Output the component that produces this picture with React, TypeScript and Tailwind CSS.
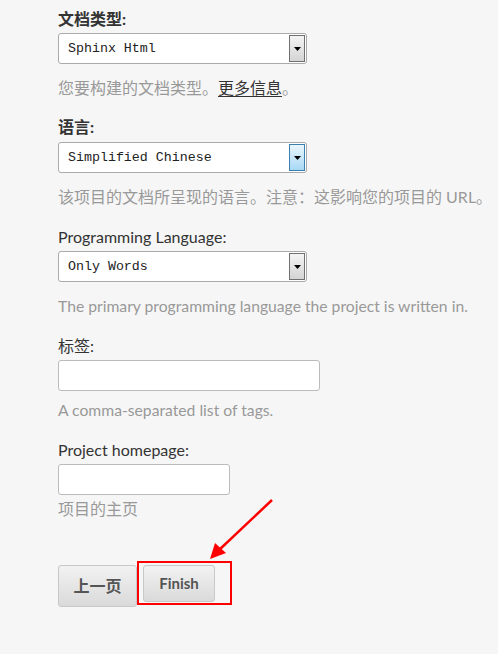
import React from 'react';

const sans = "font-['Lato','Noto_Sans_CJK_SC',sans-serif]";
const mono = "font-['Liberation_Mono','Noto_Sans_CJK_SC',monospace]";

function FakeSelect({ value, focused }: { value: string; focused?: boolean }) {
  return (
    <div className="flex h-[31px] w-[249px] items-stretch rounded-[3px] border border-[#aaa] bg-white">
      <div className={`flex flex-1 items-center pl-[9px] text-[13.3px] text-[#222] ${mono}`}>{value}</div>
      <div
        className={
          focused
            ? 'm-[1px] flex w-[16px] items-center justify-center border border-[#3c7fb1] bg-gradient-to-b from-[#eaf6fd] to-[#a7d8f5]'
            : 'm-[1px] flex w-[16px] items-center justify-center border border-[#707070] bg-gradient-to-b from-[#f4f4f4] to-[#d4d4d4]'
        }
      >
        <svg width="7" height="4" viewBox="0 0 7 4">
          <path d="M0 0h7L3.5 4z" fill="#000" />
        </svg>
      </div>
    </div>
  );
}

export default function App() {
  return (
    <div className={`min-h-[654px] w-[498px] bg-[#f6f6f6] pl-[58px] pt-[7px] ${sans}`}>
      {/* doc type */}
      <div className="h-[24px] text-[16px] leading-[24px] font-bold text-[#333]">文档类型:</div>
      <div className="mt-[2px]">
        <FakeSelect value="Sphinx Html" />
      </div>
      <p className="mt-[13px] text-[16px] leading-[22px] text-[#999]">
        您要构建的文档类型。
        <a className="text-[#333] underline underline-offset-2">更多信息</a>。
      </p>

      {/* language */}
      <div className="mt-[16px] h-[24px] text-[16px] leading-[24px] font-bold text-[#333]">语言:</div>
      <div className="mt-[3px]">
        <FakeSelect value="Simplified Chinese" focused />
      </div>
      <p className="mt-[13px] whitespace-nowrap text-[16px] leading-[22px] text-[#999]">
        该项目的文档所呈现的语言。注意：这影响您的项目的 URL。
      </p>

      {/* programming language */}
      <div className="mt-[17px] h-[24px] text-[16px] leading-[24px] text-[#333]">Programming Language:</div>
      <div className="mt-[2px]">
        <FakeSelect value="Only Words" />
      </div>
      <p className="mt-[13px] text-[15.7px] leading-[22px] text-[#999]">
        The primary programming language the project is written in.
      </p>

      {/* tags */}
      <div className="mt-[17px] h-[24px] text-[16px] leading-[24px] text-[#333]">标签:</div>
      <input className="mt-[2px] block h-[31px] w-[262px] rounded-[3px] border border-[#bbb] bg-white outline-none" />
      <p className="mt-[8px] text-[15.7px] leading-[22px] text-[#999]">A comma-separated list of tags.</p>

      {/* homepage */}
      <div className="mt-[17px] h-[24px] text-[16px] leading-[24px] text-[#333]">Project homepage:</div>
      <input className="mt-[2px] block h-[31px] w-[172px] rounded-[3px] border border-[#bbb] bg-white outline-none" />
      <p className="mt-[3px] text-[16px] leading-[22px] text-[#999]">项目的主页</p>

      {/* buttons */}
      <div className="relative mt-[45px] flex items-start gap-[6px]">
        <button className="h-[42px] w-[79px] rounded-[3px] border border-[#c8c8c8] bg-gradient-to-b from-[#f2f2f2] to-[#dadada] text-[16px] font-bold text-[#555]">
          上一页
        </button>
        <button className="h-[37px] w-[72px] rounded-[3px] border border-[#c8c8c8] bg-gradient-to-b from-[#f2f2f2] to-[#dadada] text-[15px] font-bold text-[#555]">
          Finish
        </button>

        {/* annotation: red box + arrow */}
        <div className="pointer-events-none absolute left-[79px] top-[-4px] h-[44px] w-[95px] border-2 border-[#f00]" />
        <svg
          className="pointer-events-none absolute left-[140px] top-[-66px]"
          width="90"
          height="70"
          viewBox="0 0 90 70"
        >
          <line x1="74" y1="1" x2="20" y2="52" stroke="#f00" strokeWidth="2.5" />
          <path d="M12 60 L17 44 L28 54 Z" fill="#f00" />
        </svg>
      </div>
    </div>
  );
}
